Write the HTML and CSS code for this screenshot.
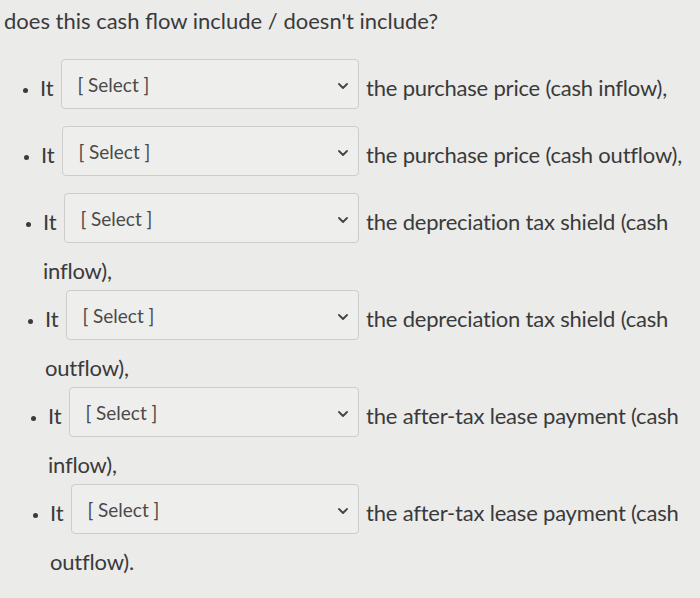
FILE: index.html
```html
<!DOCTYPE html>
<html lang="en">
<head>
<meta charset="utf-8">
<title>Cash flow question</title>
<link rel="stylesheet" href="styles.css">
</head>
<body>
<p class="question">does this cash flow include / doesn't include?</p>
<ul class="answers">
  <li class="row r1">It <span class="select"><span class="select-label">[ Select ]</span><svg class="chev" width="10" height="6" viewBox="0 0 10 6"><path d="M1 1 L5 5 L9 1" fill="none" stroke="#444" stroke-width="1.8" stroke-linecap="round" stroke-linejoin="round"/></svg></span> <span class="phrase">the purchase price (cash inflow),</span></li>
  <li class="row r2">It <span class="select"><span class="select-label">[ Select ]</span><svg class="chev" width="10" height="6" viewBox="0 0 10 6"><path d="M1 1 L5 5 L9 1" fill="none" stroke="#444" stroke-width="1.8" stroke-linecap="round" stroke-linejoin="round"/></svg></span> <span class="phrase">the purchase price (cash outflow),</span></li>
  <li class="row r3">It <span class="select"><span class="select-label">[ Select ]</span><svg class="chev" width="10" height="6" viewBox="0 0 10 6"><path d="M1 1 L5 5 L9 1" fill="none" stroke="#444" stroke-width="1.8" stroke-linecap="round" stroke-linejoin="round"/></svg></span> <span class="phrase">the depreciation tax shield (cash inflow),</span></li>
  <li class="row r4">It <span class="select"><span class="select-label">[ Select ]</span><svg class="chev" width="10" height="6" viewBox="0 0 10 6"><path d="M1 1 L5 5 L9 1" fill="none" stroke="#444" stroke-width="1.8" stroke-linecap="round" stroke-linejoin="round"/></svg></span> <span class="phrase">the depreciation tax shield (cash outflow),</span></li>
  <li class="row r5">It <span class="select"><span class="select-label">[ Select ]</span><svg class="chev" width="10" height="6" viewBox="0 0 10 6"><path d="M1 1 L5 5 L9 1" fill="none" stroke="#444" stroke-width="1.8" stroke-linecap="round" stroke-linejoin="round"/></svg></span> <span class="phrase">the after-tax lease payment (cash inflow),</span></li>
  <li class="row r6">It <span class="select"><span class="select-label">[ Select ]</span><svg class="chev" width="10" height="6" viewBox="0 0 10 6"><path d="M1 1 L5 5 L9 1" fill="none" stroke="#444" stroke-width="1.8" stroke-linecap="round" stroke-linejoin="round"/></svg></span> <span class="phrase">the after-tax lease payment (cash outflow).</span></li>
</ul>
</body>
</html>
```

FILE: styles.css
```css
html, body {
  margin: 0;
  background: #ebebea;
}

body {
  padding: 4px 2px 0 4px;
  font-family: Lato, "Open Sans", sans-serif;
  font-size: 22px;
  color: #3a3a3a;
}

.question {
  margin: 0;
  line-height: 34px;
}

.answers {
  margin: 21px 0 0 0;
  padding: 0 0 0 36px;
  line-height: 30px;
}

.row {
  --shift: 0px;
  margin: 0 0 4px var(--shift);
}

.row::marker {
  font-size: 15px;
}

.r2 { --shift: 1px; }
.r3 { --shift: 3px; }
.r4 { --shift: 5px; }
.r5 { --shift: 8px; }
.r6 { --shift: 10px; }

.phrase {
  letter-spacing: -0.2px;
}

.select {
  display: inline-flex;
  align-items: center;
  justify-content: space-between;
  box-sizing: border-box;
  width: calc(298px - var(--shift));
  height: 50px;
  margin: 0 1px 13px 2px;
  padding: 0 10px 0 15px;
  vertical-align: 4px;
  border: 1px solid #cdcdcc;
  border-radius: 4px;
  background: #eeeeed;
  font-size: 19px;
  line-height: 23px;
  color: #4a4a4a;
}

.chev {
  display: block;
  margin-top: 3px;
}
```
